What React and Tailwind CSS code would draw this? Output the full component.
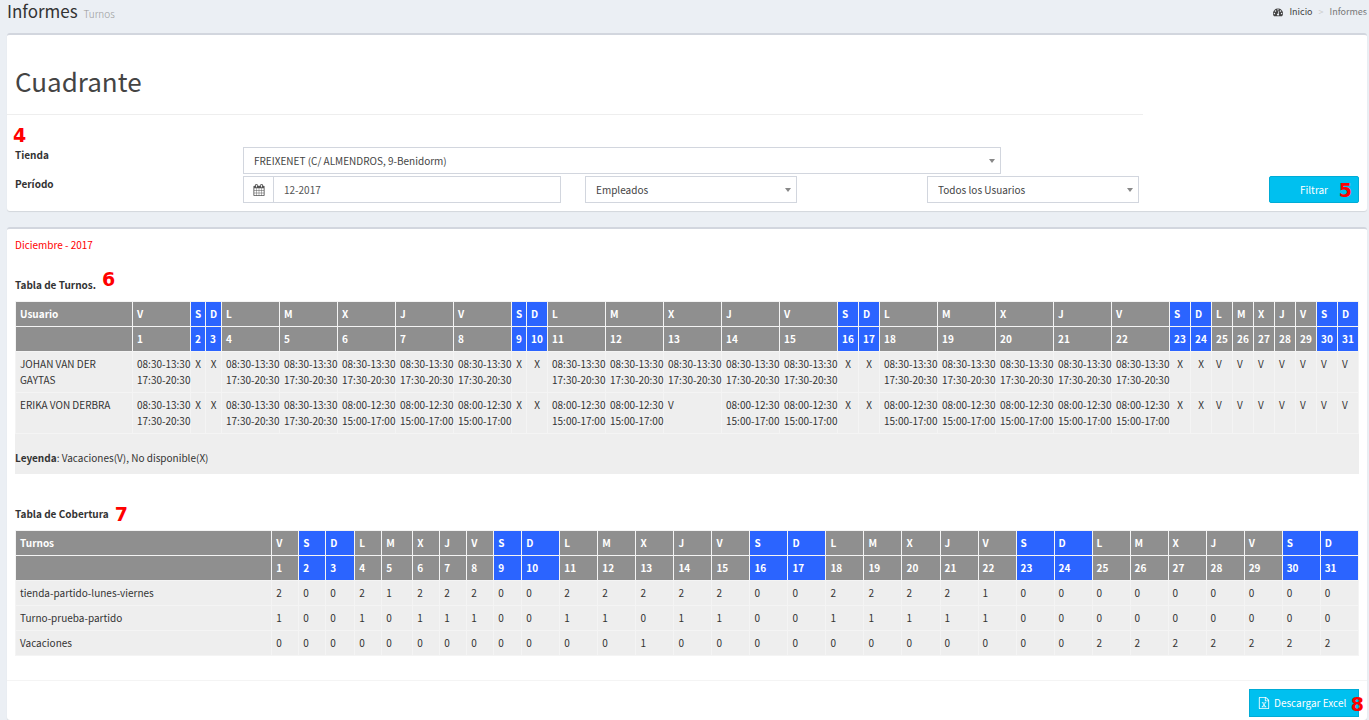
const WEEKDAYS = ['L', 'M', 'X', 'J', 'V', 'S', 'D']

// December 2017 starts on a Friday
const DAYS = Array.from({ length: 31 }, (_, i) => {
    const letter = WEEKDAYS[(i + 4) % 7]
    return { num: i + 1, letter, weekend: letter === 'S' || letter === 'D' }
})

const MORNING = ['08:30-13:30', '17:30-20:30']
const SHORT = ['08:00-12:30', '15:00-17:00']

const USERS = [
    { name: 'JOHAN VAN DER GAYTAS', shift: () => MORNING, vacation: [] },
    { name: 'ERIKA VON DERBRA', shift: d => (d < 6 ? MORNING : SHORT), vacation: [13] },
]

const COVERAGE = [
    { name: 'tienda-partido-lunes-viernes', values: '2002122200222220022221000000000' },
    { name: 'Turno-prueba-partido', values: '1001011100110110011111000000000' },
    { name: 'Vacaciones', values: '0000000000001000000000002222222' },
]

const COVERAGE_WIDTHS = [27, 27, 29, 27, 31, 27, 27, 27, 28]

function shiftWidth(day) {
    if (day.num >= 25) return 21
    if (!day.weekend) return 58
    if (day.num === 3) return 16
    return day.num < 10 ? 15 : 21
}

function DashboardIcon() {
    return (
        <svg viewBox="0 0 1792 1792" className="size-[10px] fill-current" aria-hidden="true">
            <path d="M384 1152q0-53-37.5-90.5t-90.5-37.5-90.5 37.5-37.5 90.5 37.5 90.5 90.5 37.5 90.5-37.5 37.5-90.5zm192-448q0-53-37.5-90.5t-90.5-37.5-90.5 37.5-37.5 90.5 37.5 90.5 90.5 37.5 90.5-37.5 37.5-90.5zm428 481l101-382q6-26-7.5-48.5t-38.5-29.5-48 6.5-30 39.5l-101 382q-60 5-107 43.5t-63 98.5q-20 77 20 146t117 89 146-20 89-117q16-60-6-117t-72-91zm660-33q0-53-37.5-90.5t-90.5-37.5-90.5 37.5-37.5 90.5 37.5 90.5 90.5 37.5 90.5-37.5 37.5-90.5zm-640-640q0-53-37.5-90.5t-90.5-37.5-90.5 37.5-37.5 90.5 37.5 90.5 90.5 37.5 90.5-37.5 37.5-90.5zm448 192q0-53-37.5-90.5t-90.5-37.5-90.5 37.5-37.5 90.5 37.5 90.5 90.5 37.5 90.5-37.5 37.5-90.5zm320 448q0 261-141 483-19 29-54 29h-1402q-35 0-54-29-141-221-141-483 0-182 71-348t191-286 286-191 348-71 348 71 286 191 191 286 71 348z" />
        </svg>
    )
}

function CalendarIcon() {
    return (
        <svg viewBox="0 0 1792 1792" className="size-3 fill-current" aria-hidden="true">
            <path d="M192 1664h288v-288h-288v288zm352 0h320v-288h-320v288zm-352-352h288v-320h-288v320zm352 0h320v-320h-320v320zm-352-384h288v-288h-288v288zm736 736h320v-288h-320v288zm-384-736h320v-288h-320v288zm768 736h288v-288h-288v288zm-384-352h320v-320h-320v320zm-352-864v-288q0-13-9.5-22.5t-22.5-9.5h-64q-13 0-22.5 9.5t-9.5 22.5v288q0 13 9.5 22.5t22.5 9.5h64q13 0 22.5-9.5t9.5-22.5zm736 864h288v-320h-288v320zm-384-384h320v-288h-320v288zm384 0h288v-288h-288v288zm32-480v-288q0-13-9.5-22.5t-22.5-9.5h-64q-13 0-22.5 9.5t-9.5 22.5v288q0 13 9.5 22.5t22.5 9.5h64q13 0 22.5-9.5t9.5-22.5zm384-64v1280q0 52-38 90t-90 38h-1408q-52 0-90-38t-38-90v-1280q0-52 38-90t90-38h128v-96q0-66 47-113t113-47h64q66 0 113 47t47 113v96h384v-96q0-66 47-113t113-47h64q66 0 113 47t47 113v96h128q52 0 90 38t38 90z" />
        </svg>
    )
}

function ExcelIcon() {
    return (
        <svg viewBox="0 0 1792 1792" className="size-3 fill-current" aria-hidden="true">
            <path d="M1596 380q28 28 48 76t20 88v1152q0 40-28 68t-68 28h-1344q-40 0-68-28t-28-68v-1600q0-40 28-68t68-28h896q40 0 88 20t76 48zm-444-244v376h376q-10-29-22-41l-313-313q-12-12-41-22zm384 1528v-1024h-416q-40 0-68-28t-28-68v-416h-768v1536h1280zm-979-234v106h281v-106h-75l103-161q5-7 10-16.5t7.5-13.5 3.5-4h2q1 4 5 10 2 4 4.5 7.5t6 8 6.5 8.5l107 161h-76v106h291v-106h-68l-192-273 195-282h67v-107h-279v107h74l-103 159q-4 7-10 16.5t-9 13.5l-2 3h-2q-1-4-5-10-6-11-17-23l-106-159h76v-107h-290v107h68l189 272-194 283h-68z" />
        </svg>
    )
}

function Step({ n, className = '' }) {
    return <span className={`font-['DejaVu_Sans'] text-[19px] leading-4 font-bold text-[#ff0000] ${className}`}>{n}</span>
}

function Select({ label, value, className }) {
    return (
        <div className={`relative ${className}`}>
            <select aria-label={label} defaultValue={value}
                className="block h-[27px] w-full appearance-none border border-[#d2d6de] bg-white px-[10px] text-[#444]">
                <option>{value}</option>
            </select>
            <span className="pointer-events-none absolute top-3 right-[6px] border-x-3 border-t-4 border-x-transparent border-t-[#888]" />
        </div>
    )
}

function Box({ className = '', children }) {
    return (
        <section className={`rounded-[3px] border-t-2 border-[#d2d6de] bg-white shadow-[0_1px_1px_rgba(0,0,0,0.1)] ${className}`}>
            {children}
        </section>
    )
}

function DayTable({ title, firstWidth, widths, children }) {
    const cell = 'border border-[#f4f4f4] px-1 py-1 text-left'
    return (
        <table className="w-full table-fixed border-collapse bg-[#eee]">
            <colgroup>
                <col style={{ width: firstWidth }} />
                {widths.map((w, i) => <col key={i} style={{ width: w }} />)}
            </colgroup>
            <thead className="text-white">
                <tr>
                    <th className={`${cell} bg-[#8f8f8f]`}>{title}</th>
                    {DAYS.map(d => (
                        <th key={d.num} className={`${cell} ${d.weekend ? 'bg-[#2b64ff]' : 'bg-[#8f8f8f]'}`}>{d.letter}</th>
                    ))}
                </tr>
                <tr>
                    <th className={`${cell} bg-[#8f8f8f]`}></th>
                    {DAYS.map(d => (
                        <th key={d.num} className={`${cell} ${d.weekend ? 'bg-[#2b64ff]' : 'bg-[#8f8f8f]'}`}>{d.num}</th>
                    ))}
                </tr>
            </thead>
            <tbody>{children}</tbody>
        </table>
    )
}

function ShiftCell({ user, day }) {
    const cell = 'border border-[#f4f4f4] p-1 align-top'
    if (day.num >= 25 || user.vacation.includes(day.num)) return <td className={cell}>V</td>
    if (day.weekend) return <td className={`${cell} text-center`}>X</td>
    return (
        <td className={`${cell} whitespace-nowrap`}>
            {user.shift(day.num).map(s => <div key={s}>{s}</div>)}
        </td>
    )
}

export default function App() {
    return (
        <div className="flex min-h-screen flex-col bg-[#ebeff4] pr-[2px] pl-[7px] font-['Noto_Sans_CJK_SC',sans-serif] text-[10px] leading-4 text-[#333]">
            <header className="flex h-[33px] items-start justify-between">
                <h1 className="text-[17px] leading-[22px] text-[#333]">
                    Informes <small className="ml-[2px] text-[10px] font-light text-[#999]">Turnos</small>
                </h1>
                <nav className="flex items-center gap-[6px] pt-1 text-[9px] text-[#777]">
                    <a href="#inicio" className="flex items-center gap-[6px] text-[#444]"><DashboardIcon /> Inicio</a>
                    <span className="text-[#ccc]">&gt;</span>
                    <span>Informes</span>
                </nav>
            </header>

            <Box className="pb-2">
                <h2 className="px-2 pt-9 pb-[23px] text-[26px] leading-5 text-[#444]">Cuadrante</h2>
                <hr className="w-[83.5%] border-[#eee]" />
                <div className="px-2">
                    <div className="-ml-[2px] h-8 pt-3"><Step n="4" /></div>
                    <div className="grid grid-cols-12 gap-x-6 gap-y-[2px]">
                        <span className="col-span-2 font-bold">Tienda</span>
                        <Select label="Tienda" value="FREIXENET (C/ ALMENDROS, 9-Benidorm)" className="col-span-7 mr-4" />
                        <label htmlFor="periodo" className="col-span-2 col-start-1 font-bold">Período</label>
                        <div className="col-span-3 flex h-[27px] border border-[#d2d6de] text-[#555]">
                            <span className="flex w-[30px] items-center justify-center border-r border-[#d2d6de]"><CalendarIcon /></span>
                            <input id="periodo" type="text" defaultValue="12-2017" className="min-w-0 flex-1 px-[10px]" />
                        </div>
                        <Select label="Tipo" value="Empleados" className="col-span-3 w-2/3" />
                        <Select label="Usuario" value="Todos los Usuarios" className="col-span-3 w-2/3" />
                        <button type="button" className="relative h-[27px] rounded-[2px] border border-[#00acd6] bg-[#00c0ef] text-white">
                            Filtrar
                            <Step n="5" className="absolute top-[5px] right-[6px]" />
                        </button>
                    </div>
                </div>
            </Box>

            <Box className="mt-4 flex-1">
                <div className="px-2">
                    <p className="pt-2 text-[#ff0000]">Diciembre - 2017</p>
                    <h3 className="mt-6 mb-2 flex gap-[6px] font-bold">Tabla de Turnos. <Step n="6" className="-mt-[6px]" /></h3>
                    <DayTable title="Usuario" firstWidth={117} widths={DAYS.map(shiftWidth)}>
                        {USERS.map(u => (
                            <tr key={u.name}>
                                <td className="border border-[#f4f4f4] p-1 align-top">{u.name}</td>
                                {DAYS.map(d => <ShiftCell key={d.num} user={u} day={d} />)}
                            </tr>
                        ))}
                    </DayTable>
                    <p className="bg-[#eee] pt-4 pb-2"><b>Leyenda</b>: Vacaciones(V), No disponible(X)</p>

                    <h3 className="mt-8 mb-2 flex gap-[6px] font-bold">Tabla de Cobertura <Step n="7" /></h3>
                    <DayTable title="Turnos" firstWidth={256} widths={DAYS.map((d, i) => COVERAGE_WIDTHS[i] || 38)}>
                        {COVERAGE.map(row => (
                            <tr key={row.name}>
                                <td className="border border-[#f4f4f4] p-1">{row.name}</td>
                                {[...row.values].map((v, i) => <td key={i} className="border border-[#f4f4f4] p-1">{v}</td>)}
                            </tr>
                        ))}
                    </DayTable>
                </div>
                <footer className="mt-6 flex justify-end border-t border-[#f4f4f4] px-2 pt-2">
                    <button type="button" className="relative flex h-7 w-[110px] items-center gap-1 border border-[#00acd6] bg-[#00c0ef] pl-2 whitespace-nowrap text-white">
                        <ExcelIcon /> Descargar Excel
                        <Step n="8" className="absolute top-[6px] -right-[6px]" />
                    </button>
                </footer>
            </Box>
        </div>
    )
}
